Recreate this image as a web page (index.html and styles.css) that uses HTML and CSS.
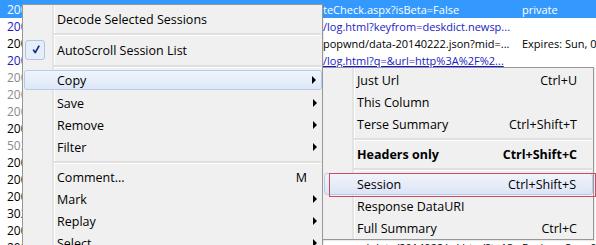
FILE: index.html
```html
<!DOCTYPE html>
<html lang="en">
  <head>
    <meta charset="UTF-8" />
    <title>Sessions</title>
    <link rel="stylesheet" href="styles.css">
  </head>
  <body>
    <div class="session-list">
      <div class="row selected"><span class="result">200</span><span class="url">teCheck.aspx?isBeta=False</span><span class="caching">private</span></div>
      <div class="row blue"><span class="result">200</span><span class="url">/log.html?keyfrom=deskdict.newsp...</span><span class="caching"></span></div>
      <div class="row"><span class="result">200</span><span class="url">popwnd/data-20140222.json?mid=...</span><span class="caching">Expires: Sun, 0</span></div>
      <div class="row blue"><span class="result">200</span><span class="url"><u>/log.html?q=&amp;url=http%3A%2F%2...</u></span><span class="caching"></span></div>
      <div class="row gray"><span class="result">200</span><span class="url"></span><span class="caching"></span></div>
      <div class="row gray"><span class="result">200</span><span class="url"></span><span class="caching"></span></div>
      <div class="row gray"><span class="result">200</span><span class="url"></span><span class="caching"></span></div>
      <div class="row"><span class="result">200</span><span class="url"></span><span class="caching"></span></div>
      <div class="row gray"><span class="result">502</span><span class="url"></span><span class="caching"></span></div>
      <div class="row"><span class="result">200</span><span class="url"></span><span class="caching"></span></div>
      <div class="row"><span class="result">200</span><span class="url"></span><span class="caching"></span></div>
      <div class="row"><span class="result">200</span><span class="url"></span><span class="caching"></span></div>
      <div class="row"><span class="result">302</span><span class="url"></span><span class="caching"></span></div>
      <div class="row"><span class="result">200</span><span class="url"></span><span class="caching"></span></div>
      <div class="row"><span class="result">200</span><span class="url indent">wkdata/2014022/cd.html?t=13</span><span class="caching">Expires: Sun, 0</span></div>
    </div>

    <div class="context-menu main-menu">
      <div class="menu-item"><span class="label">Decode Selected Sessions</span></div>
      <div class="menu-separator"></div>
      <div class="menu-item tall">
        <span class="check-box">
          <svg width="18" height="18" viewBox="0 0 18 18"><path d="M7.2 8.6 L9.2 11.6 L13.2 4.6" fill="none" stroke="#102b7c" stroke-width="1.7" stroke-linejoin="round"/></svg>
        </span>
        <span class="label">AutoScroll Session List</span>
      </div>
      <div class="menu-separator"></div>
      <div class="menu-item active"><span class="label">Copy</span><span class="arrow"></span></div>
      <div class="menu-item"><span class="label">Save</span><span class="arrow"></span></div>
      <div class="menu-item"><span class="label">Remove</span><span class="arrow"></span></div>
      <div class="menu-item"><span class="label">Filter</span><span class="arrow"></span></div>
      <div class="menu-separator"></div>
      <div class="menu-item"><span class="label">Comment...</span><span class="shortcut">M</span><span class="arrow none"></span></div>
      <div class="menu-item"><span class="label">Mark</span><span class="arrow"></span></div>
      <div class="menu-item"><span class="label">Replay</span><span class="arrow"></span></div>
      <div class="menu-item"><span class="label">Select</span><span class="arrow"></span></div>
      <div class="menu-item"><span class="label">Compare</span><span class="arrow none"></span></div>
    </div>

    <div class="context-menu sub-menu">
      <div class="menu-item"><span class="label">Just Url</span><span class="shortcut">Ctrl+U</span><span class="arrow none"></span></div>
      <div class="menu-item"><span class="label">This Column</span><span class="arrow none"></span></div>
      <div class="menu-item"><span class="label">Terse Summary</span><span class="shortcut">Ctrl+Shift+T</span><span class="arrow none"></span></div>
      <div class="menu-separator"></div>
      <div class="menu-item bold"><span class="label">Headers only</span><span class="shortcut">Ctrl+Shift+C</span><span class="arrow none"></span></div>
      <div class="menu-separator"></div>
      <div class="menu-item active"><span class="label">Session</span><span class="shortcut">Ctrl+Shift+S</span><span class="arrow none"></span></div>
      <div class="menu-item"><span class="label">Response DataURI</span><span class="arrow none"></span></div>
      <div class="menu-item"><span class="label">Full Summary</span><span class="shortcut">Ctrl+C</span><span class="arrow none"></span></div>
    </div>

    <div class="annotation"></div>
  </body>
</html>
```

FILE: styles.css
```css
* {
  margin: 0;
  padding: 0;
  box-sizing: border-box;
}

body {
  width: 596px;
  height: 245px;
  overflow: hidden;
  position: relative;
  background: white;
  font-family: "Segoe UI", "Open Sans", "Noto Sans", sans-serif;
  font-size: 12.5px;
  color: #000;
}

/* session list behind the menus */
.session-list {
  margin-top: 1px;
  font-size: 11px;
}

.row {
  display: grid;
  grid-template-columns: 322px 198px 1fr;
  height: 17px;
  line-height: 17px;
  white-space: nowrap;
  overflow: hidden;
}

.row .result {
  padding-left: 7px;
  font-size: 12px;
}

.row .url {
  padding-left: 1px;
  overflow: hidden;
}

.row .url.indent {
  padding-left: 36px;
}

.row .caching {
  padding-left: 2px;
}

.row.selected {
  background: #3399ff;
  color: white;
  margin-top: -2px;
  height: 19px;
  line-height: 21px;
}

.row.blue {
  color: #1a1ac4;
}

.row.gray {
  color: #8a8a8a;
}

/* context menus */
.context-menu {
  position: absolute;
  background: #f0f0f0;
  border: 1px solid #979797;
  box-shadow: 1px 1px 1px rgba(0, 0, 0, 0.08);
}

.context-menu::before {
  content: "";
  position: absolute;
  top: 0;
  bottom: 0;
  left: 29px;
  width: 2px;
  background: #e2e3e3;
  border-right: 1px solid #fff;
}

.main-menu {
  left: 22px;
  top: 4px;
  width: 301px;
  padding-top: 3px;
}

.sub-menu {
  left: 322px;
  top: 67px;
  width: 272px;
  padding-top: 1px;
}

.menu-item {
  position: relative;
  display: flex;
  align-items: center;
  height: 22px;
  padding-left: 34px;
  white-space: nowrap;
}

.menu-item.tall {
  height: 24px;
}

.menu-item.bold {
  font-weight: bold;
}

.menu-item .label {
  flex: 1;
}

.menu-item.active {
  height: 20px;
  margin: 0 0 2px 1px;
  padding-left: 32px;
  border: 1px solid #b5cdea;
  border-radius: 3px;
  background: linear-gradient(#f0f5fc, #dde8f6);
}

.sub-menu .menu-item.active {
  height: 22px;
  margin: 0 0 0 1px;
  background: linear-gradient(#f1f4fb, #dce4f5);
}

.arrow {
  width: 15px;
  height: 8px;
  position: relative;
}

.arrow::after {
  content: "";
  position: absolute;
  left: 6px;
  top: 0;
  border-left: 4px solid #000;
  border-top: 4px solid transparent;
  border-bottom: 4px solid transparent;
}

.arrow.none::after {
  display: none;
}

.sub-menu .arrow {
  width: 16px;
}

.check-box {
  position: absolute;
  left: 2px;
  top: 2px;
  width: 20px;
  height: 20px;
  border: 1px solid #a9c6ea;
  border-radius: 3px;
  background: #e6eefa;
}

.menu-separator {
  height: 8px;
  margin-left: 31px;
  position: relative;
}

.menu-separator::after {
  content: "";
  position: absolute;
  left: 0;
  right: 1px;
  top: 3px;
  height: 2px;
  background: #e0e0e0;
  border-bottom: 1px solid #fff;
}

/* red box drawn over the screenshot */
.annotation {
  position: absolute;
  left: 329px;
  top: 173px;
  width: 267px;
  height: 24px;
  border: 1px solid #d04a66;
}
```
